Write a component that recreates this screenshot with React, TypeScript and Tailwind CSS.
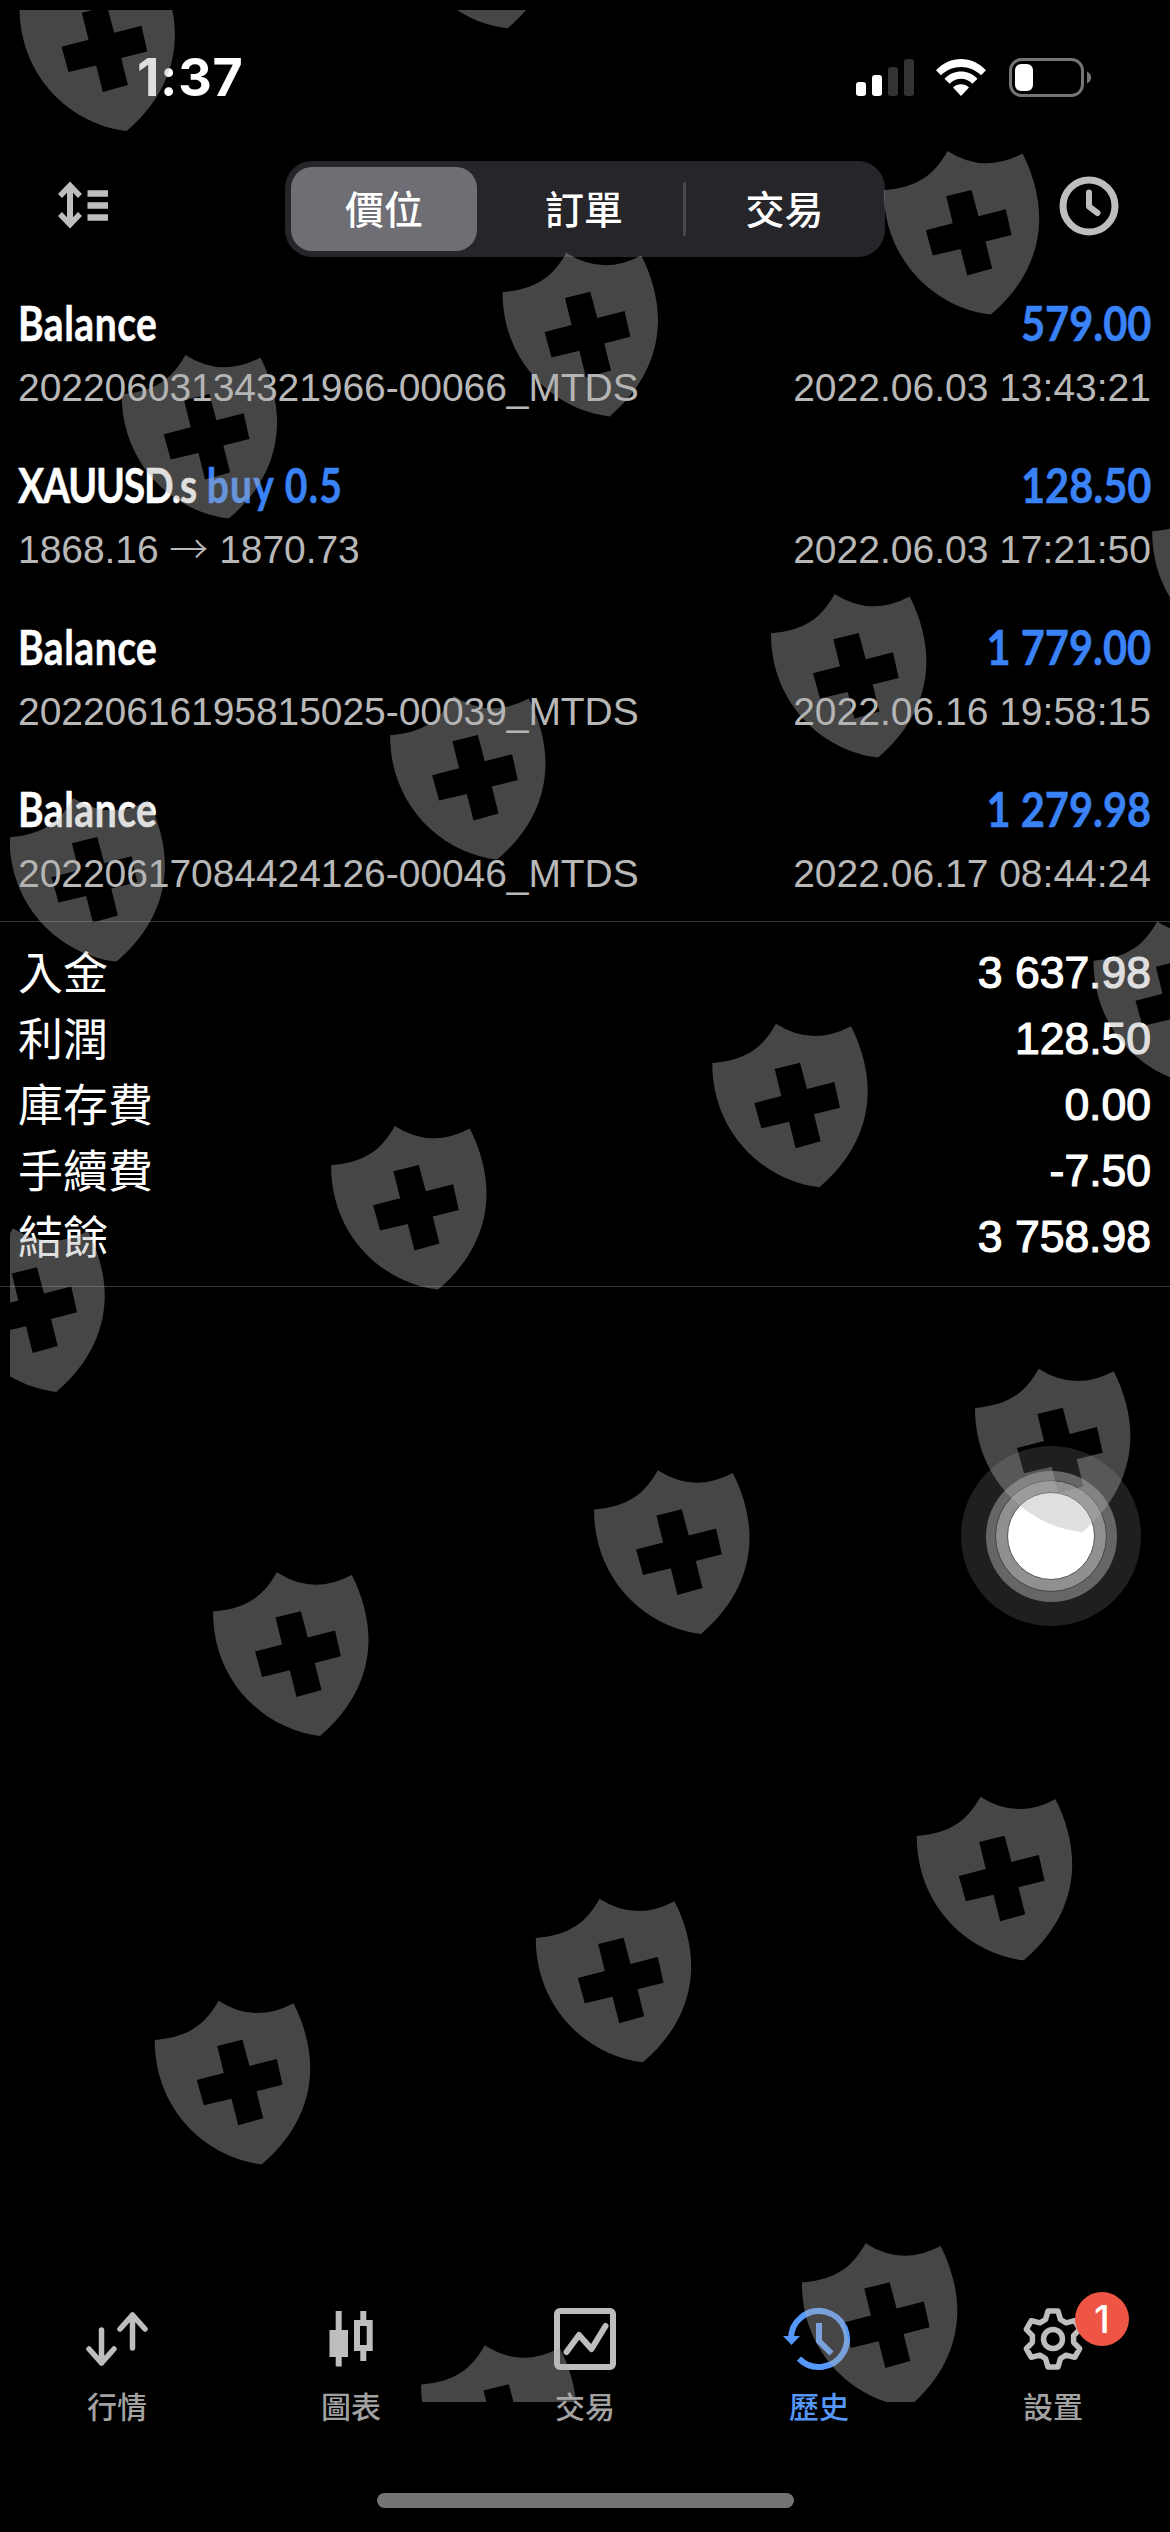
import type { ReactNode } from 'react';

const deals = [
  { title: 'Balance', side: '', comment: '20220603134321966-00066_MTDS', profit: '579.00', time: '2022.06.03 13:43:21' },
  { title: 'XAUUSD.s', side: 'buy 0.5', comment: '1868.16', close: '1870.73', profit: '128.50', time: '2022.06.03 17:21:50' },
  { title: 'Balance', side: '', comment: '20220616195815025-00039_MTDS', profit: '1 779.00', time: '2022.06.16 19:58:15' },
  { title: 'Balance', side: '', comment: '20220617084424126-00046_MTDS', profit: '1 279.98', time: '2022.06.17 08:44:24' },
];

const summary = [
  ['入金', '3 637.98'],
  ['利潤', '128.50'],
  ['庫存費', '0.00'],
  ['手續費', '-7.50'],
  ['結餘', '3 758.98'],
];

const shields = [
  [19.2, -33.3], [400.2, -136],
  [883.5, 150.3], [502.3, 252.1], [121.4, 354.2],
  [1151.9, 491.3], [770.7, 593.3], [389.8, 695.3], [9.2, 797.3],
  [1093.2, 920.7], [712, 1023], [330.8, 1125.3], [-51, 1227.6],
  [974.7, 1368], [593.8, 1469.6], [212.8, 1571.6],
  [916.5, 1796], [535.5, 1898], [154.5, 2000],
  [801.6, 2242.6], [420.8, 2344.6],
];

const SHIELD =
  'M.3 40C35 37 51 24 64 .7Q100 24 139 3.3C150 25 156 48 155.7 70C155 110 134 142 107.3 164.3C52 158 0 110 .3 40Z' +
  'M62.7 46L88 39.7L95 66L122.3 59L128 84.7L102 91.3L108.7 118.3L83.7 125.3L77 98.7L49.3 105.3L42.3 80L69.3 73Z';

const StatusBar = () => (
  <div className="flex h-[155px] items-start justify-between pl-[137px] pr-[78px] pt-[58px]">
    <span className="font-[Inter,sans-serif] text-[52px] leading-[40px] font-bold tracking-[0.7px]">1:37</span>
    <div className="flex items-center">
      <svg width="58" height="39" viewBox="0 0 58 39" className="mr-[22px]">
        <rect x="0" y="24" width="10" height="14" rx="3" fill="#fff" />
        <rect x="16" y="17" width="10" height="21" rx="3" fill="#fff" />
        <rect x="32" y="9" width="10" height="29" rx="3" fill="#333" />
        <rect x="48" y="1" width="10" height="37" rx="3" fill="#333" />
      </svg>
      <svg width="50" height="39" viewBox="0 0 50 39" className="mr-[23px]" fill="#fff">
        <path d="M0 12.3C14-2.8 36-2.8 50 12.3L45 17.3C34 6.3 16 6.3 5 17.3Z" />
        <path d="M8.5 20.8C18 11.2 32 11.2 41.5 20.8L36.4 25.8C30 19.2 20 19.2 13.6 25.8Z" />
        <path d="M17 29.6C21.5 25.2 28.5 25.2 33 29.6L25 38Z" />
      </svg>
      <svg width="83" height="39" viewBox="0 0 83 39">
        <rect x="1.5" y="1.5" width="72" height="36" rx="11" fill="none" stroke="#757575" strokeWidth="3" />
        <rect x="6" y="6" width="18" height="27" rx="6" fill="#fff" />
        <path d="M78 13.5C83.5 16 83.5 23 78 25.5Z" fill="#757575" />
      </svg>
    </div>
  </div>
);

const Toolbar = () => (
  <div className="flex h-[118px] items-start justify-between pl-[57px] pr-[51px]">
    <svg width="52" height="50" viewBox="0 0 52 50" className="mt-[26px]" fill="none" stroke="#bebebe">
      <path d="M13 5V43" strokeWidth="6" />
      <path d="M3 15L13 4.5L23 15M3 33L13 43.5L23 33" strokeWidth="5.5" />
      <path d="M30.5 12.5H51M30.5 24.5H51M30.5 36.5H51" strokeWidth="6.5" />
    </svg>
    <div className="mt-[6px] ml-[1px] mr-[-1px] flex h-[96px] w-[600px] items-center rounded-[27px] bg-[#26252a] p-[6px] text-[39px] font-medium">
      <div className="flex h-[84px] w-[186px] items-center justify-center rounded-[21px] bg-[#6f6e74] pb-[4px]">價位</div>
      <div className="flex flex-1 items-center justify-center pb-[4px] pl-2">訂單</div>
      <div className="h-[54px] w-[3px] rounded bg-[#48474d]" />
      <div className="flex w-[193px] items-center justify-center pb-[4px] pl-1">交易</div>
    </div>
    <svg width="60" height="60" viewBox="0 0 60 60" className="mt-[21px]" fill="none" stroke="#bebebe">
      <circle cx="30" cy="30" r="26" strokeWidth="7" />
      <path d="M30 16.500V30.500L38.500 37" strokeWidth="6" strokeLinecap="round" strokeLinejoin="round" />
    </svg>
  </div>
);

const DealRow = ({ deal }: any) => (
  <div className="flex h-[162px] flex-col pt-[20px] pl-[18px] pr-[19px]">
    <div className="flex h-[60px] items-center justify-between font-[Lato,sans-serif] text-[47px] font-bold [-webkit-text-stroke:0.5px_currentColor]">
      <span className="origin-left scale-x-[0.83] whitespace-pre">
        <span className={deal.side ? 'tracking-[-1.4px]' : 'tracking-[0.6px]'}>{deal.title}</span>
        {deal.side && <span className="tracking-[1.5px] text-[#3a82f7]"> {deal.side}</span>}
      </span>
      <span className="origin-right scale-x-[0.885] text-[#3a82f7]">{deal.profit}</span>
    </div>
    <div className="flex h-[70px] items-center justify-between font-['Liberation_Sans',sans-serif] text-[39px] text-[#b8b8b8]">
      <span className="whitespace-pre tracking-[-0.06px]">
        {deal.comment}
        {deal.close && (
          <>
            {' '}
            <span className="inline-block w-[39px] text-center font-['Noto_Sans_CJK_TC',sans-serif] leading-none font-light">→</span>
            {' '}{deal.close}
          </>
        )}
      </span>
      <span>{deal.time}</span>
    </div>
  </div>
);

const Summary = () => (
  <div className="h-[366px] border-y border-[#3a3a3a] pt-[17px] pl-[18px] pr-[19px]">
    {summary.map(([label, value]) => (
      <div key={label} className="flex h-[66px] items-center justify-between">
        <span className="pb-[3px] text-[45px] font-normal">{label}</span>
        <span className="pt-[3px] font-['Liberation_Sans',sans-serif] text-[44.5px] [-webkit-text-stroke:1.2px_currentColor]">{value}</span>
      </div>
    ))}
  </div>
);

const TabItem = ({ label, active, children }: { label: string; active?: boolean; children: ReactNode }) => (
  <div className={`relative flex w-[234px] flex-col items-center ${active ? 'text-[#5598fa]' : 'text-[#bebebe]'}`}>
    <svg width="72" height="66" viewBox="-36 -33 72 66" fill="none" stroke="currentColor" strokeWidth="6">
      {children}
    </svg>
    <span className={`mt-[11px] text-[30px] leading-[44px] font-medium ${active ? '' : 'text-[#a2a2a2]'}`}>{label}</span>
  </div>
);

const GEAR =
  'M-5-28L5-28L7.500-19.500L13.100-16.200L21.700-18.300L26.700-9.700L20.600-3.300L20.600 3.300L26.700 9.700L21.700 18.300L13.100 16.200L7.500 19.500L5 28L-5 28' +
  'L-7.500 19.500L-13.100 16.200L-21.700 18.300L-26.700 9.700L-20.600 3.300L-20.600-3.300L-26.700-9.700L-21.700-18.300L-13.100-16.200L-7.500-19.500Z';

const TabBar = () => (
  <div className="flex h-[187px]">
    <TabItem label="行情">
      <g strokeLinecap="round" strokeLinejoin="round" strokeWidth="5.500">
        <path d="M-15.500-9V24M-28 10L-15.500 24L-3 10" />
        <path d="M15.500 9V-24M3-10L15.500-24L28-10" />
      </g>
    </TabItem>
    <TabItem label="圖表">
      <path d="M-12.300-28V27.500M12.300-28V-16M12.300 9V22" />
      <path d="M-21.500-9H-3V18H-21.500Z" fill="currentColor" stroke="none" />
      <path d="M6-16H18.700V9H6Z" />
    </TabItem>
    <TabItem label="交易">
      <rect x="-28" y="-28" width="56" height="56" rx="3" />
      <path d="M-18.500 13L-6-4L6.500 10L20.500-13" strokeLinecap="round" strokeLinejoin="round" />
    </TabItem>
    <TabItem label="歷史" active>
      <path d="M-28 1A28 28 0 1 1-20 19.600" />
      <path d="M-36-3H-19L-27.500 6Z" fill="currentColor" stroke="none" />
      <path d="M0-16V2L12.500 14.500" />
    </TabItem>
    <TabItem label="設置">
      <path d={GEAR} strokeWidth="5.500" strokeLinejoin="round" />
      <circle r="9.500" strokeWidth="5.500" />
    </TabItem>
  </div>
);

const AssistiveTouch = () => (
  <div className="absolute top-[1446px] left-[961px] flex size-[180px] items-center justify-center rounded-full bg-[#1f1f1f]">
    <div className="flex size-[131px] items-center justify-center rounded-full bg-[#666]">
      <div className="flex size-[112px] items-center justify-center rounded-full border border-[#444] bg-[#909090]">
        <div className="size-[88px] rounded-full border border-[#555] bg-white" />
      </div>
    </div>
  </div>
);

const Watermark = () => (
  <div className="pointer-events-none absolute top-[10px] right-0 left-[10px] h-[2392px] overflow-hidden">
    <svg width="1160" height="2392" viewBox="10 10 1160 2392" fill="#afafaf" fillOpacity="0.4" fillRule="evenodd">
      {shields.map(([x, y]) => (
        <path key={`${x}-${y}`} d={SHIELD} transform={`translate(${x} ${y})`} />
      ))}
    </svg>
  </div>
);

export default function App() {
  return (
    <div className="relative flex h-[2532px] w-[1170px] flex-col overflow-hidden bg-black font-['Noto_Sans_CJK_TC',sans-serif] text-white">
      <StatusBar />
      <Toolbar />
      <div>
        {deals.map((deal) => (
          <DealRow key={deal.time} deal={deal} />
        ))}
      </div>
      <Summary />
      <div className="flex-1" />
      <TabBar />
      <div className="mb-[24px] h-[15px] w-[417px] self-center rounded-full bg-[#747474]" />
      <div className="absolute top-[2292px] left-[1075px] flex size-[54px] items-center justify-center rounded-full bg-[#ee5545] font-[Inter,sans-serif] text-[38px] font-medium">
        1
      </div>
      <AssistiveTouch />
      <Watermark />
    </div>
  );
}
